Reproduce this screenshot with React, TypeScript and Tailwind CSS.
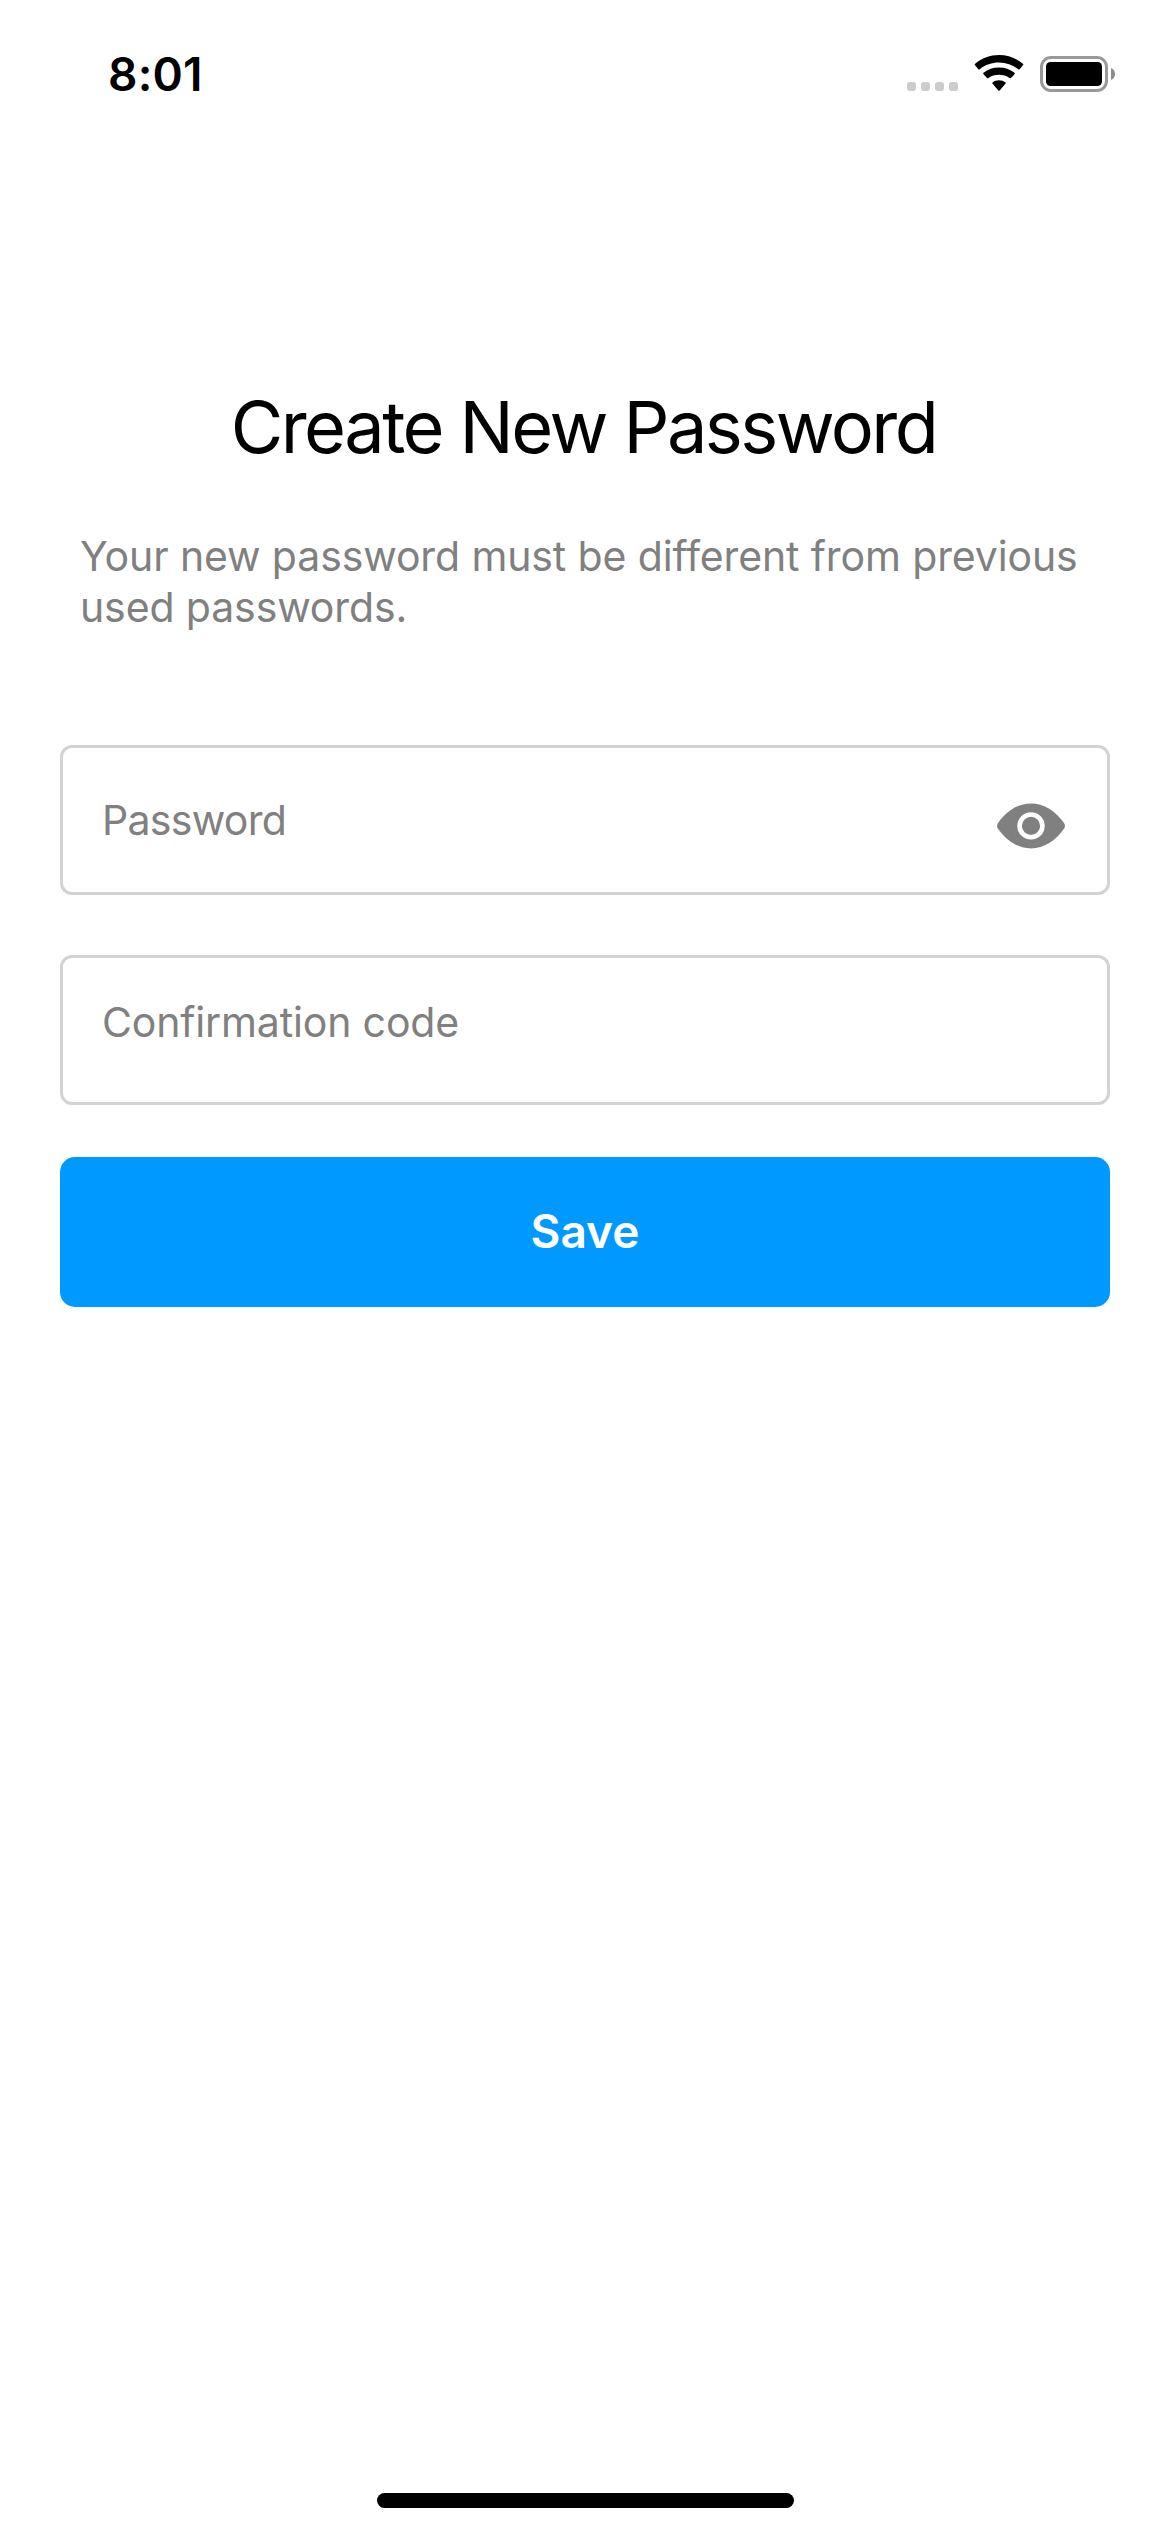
import React from "react";

function StatusBar() {
  return (
    <header className="flex h-[132px] items-start justify-between pl-[108px] pr-[55px]">
      <time className="mt-[46px] text-[46px] leading-[56px] font-semibold tracking-[0.2px]">8:01</time>
      <div className="mt-[54px] flex h-10 items-start">
        <div className="mt-7 mr-[16px] flex gap-[5px]">
          {[0, 1, 2, 3].map((dot) => (
            <span key={dot} className="size-[9px] rounded-[3px] bg-[#cccccc]" />
          ))}
        </div>
        <svg className="mr-4 h-[38px] w-[50px]" viewBox="0 0 50 38" fill="black" aria-label="Wi-Fi">
          <path d="M1.1 11.3Q0.3 10.5 1.1 9.8C7.8 4.1 16.2 1 25 1S42.2 4.1 48.9 9.8Q49.7 10.5 48.9 11.3L45.7 15.2Q45 15.9 44.2 15.2C38.8 10.9 32.1 8.6 25 8.6S11.2 10.9 5.8 15.2Q5 15.9 4.3 15.2Z" />
          <path d="M9.5 20.2Q8.8 19.5 9.5 18.8C13.9 15.4 19.3 13.5 25 13.5S36.1 15.4 40.5 18.8Q41.2 19.5 40.5 20.2L37 24Q36.3 24.6 35.5 24C32.5 21.9 28.9 20.8 25 20.8S17.5 21.9 14.5 24Q13.7 24.6 13 24Z" />
          <path d="M18.4 29.6Q17.8 28.9 18.5 28.4C20.4 27 22.6 26.2 25 26.2S29.6 27 31.5 28.4Q32.2 28.9 31.6 29.6L25.7 36.5Q25 37.2 24.3 36.5Z" />
        </svg>
        <svg className="h-[40px] w-[75px]" viewBox="0 0 75 40" aria-label="Battery">
          <rect x="1.5" y="3.5" width="65" height="33" rx="9.5" fill="none" stroke="#999999" strokeWidth="3" />
          <rect x="6" y="8" width="56" height="24" rx="4.5" fill="black" />
          <path d="M71 14C73.5 15 75 17.3 75 20S73.5 25 71 26Z" fill="#8c8c8c" />
        </svg>
      </div>
    </header>
  );
}

function EyeIcon() {
  return (
    <svg className="mt-[12px] h-[46px] w-[68px]" viewBox="0 0 68 46" aria-label="Show password">
      <path
        d="M34 0.4C21 0.4 9.5 8 1 19.9Q-0.9 22.9 1 25.8C9.5 37.8 21 45.4 34 45.4S58.5 37.8 67 25.8Q68.9 22.9 67 19.9C58.5 8 47 0.4 34 0.4Z"
        fill="#808080"
      />
      <circle cx="34" cy="22.9" r="11.4" fill="none" stroke="white" strokeWidth="4.6" />
    </svg>
  );
}

export default function App() {
  return (
    <div className="flex h-[2532px] w-[1170px] flex-col bg-white font-['Inter',sans-serif] text-black">
      <StatusBar />
      <main className="flex flex-1 flex-col px-[60px]">
        <h1 className="mt-[250px] pr-[3px] text-center text-[72px] leading-[90px] font-normal tracking-[-2.55px]">
          Create New Password
        </h1>
        <p className="mt-[59px] ml-[20px] text-[41px] leading-[51px] tracking-[-0.12px] whitespace-nowrap text-[#808080]">
          Your new password must be different from previous
          <br />
          used passwords.
        </p>
        <div className="mt-[112px] flex h-[150px] items-center justify-between rounded-xl border-3 border-[#d3d3d3] pr-[42px] pl-[39px]">
          <span className="text-[41px] leading-[51px] tracking-[-0.7px] text-[#808080]">Password</span>
          <EyeIcon />
        </div>
        <div className="mt-[60px] flex h-[150px] items-start rounded-xl border-3 border-[#d3d3d3] pt-[39px] pl-[39px]">
          <span className="text-[41px] leading-[51px] tracking-[-0.15px] text-[#808080]">Confirmation code</span>
        </div>
        <button className="mt-[52px] h-[150px] rounded-[15px] bg-[#0099ff] pb-[3px] text-[46px] leading-[56px] font-semibold text-white">
          Save
        </button>
      </main>
      <footer className="flex justify-center pb-6">
        <div className="h-[15px] w-[417px] rounded-full bg-black" />
      </footer>
    </div>
  );
}
